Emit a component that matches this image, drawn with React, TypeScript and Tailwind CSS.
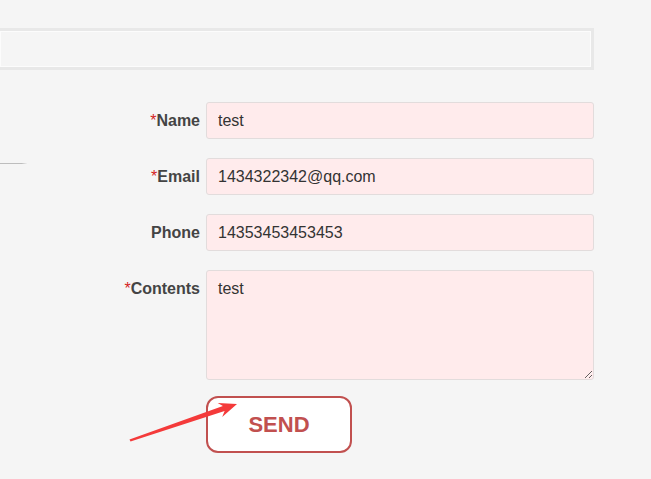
import React from "react";

const font = { fontFamily: '"Liberation Sans", Arial, sans-serif' };

function Label({ text, required }: { text: string; required?: boolean }) {
  return (
    <div className="w-[179px] shrink-0 pr-[6px] text-right text-[16px] font-bold text-[#444] leading-[18px]">
      {required && <span className="font-normal text-[#d41f1f]">*</span>}
      {text}
    </div>
  );
}

function Field({ label, value, required }: { label: string; value: string; required?: boolean }) {
  return (
    <div className="flex items-center mb-[19px]">
      <Label text={label} required={required} />
      <input
        readOnly
        value={value}
        className="w-[388px] h-[37px] rounded-[3px] border border-[#e2dcdc] bg-[#ffebec] px-[11px] text-[16px] text-[#333] outline-none"
        style={font}
      />
    </div>
  );
}

export default function App() {
  return (
    <div className="relative min-h-[479px] w-[651px] overflow-hidden bg-[#f5f5f5]" style={font}>
      <div className="mt-[28px] h-[42px] w-[594px] border-[3px] border-l-0 border-[#e8e8e8] shadow-[inset_0_0_0_1px_#fcfcfc]" />

      <div className="mt-[32px] flex">
        <div className="w-[27px] shrink-0 pt-[61px]">
          <div className="h-px w-[27px] bg-gradient-to-r from-[#bdbdbd] from-80% to-[#f0f0f0]" />
        </div>
        <div>
          <Field label="Name" value="test" required />
          <Field label="Email" value="1434322342@qq.com" required />
          <Field label="Phone" value="14353453453453" />
          <div className="flex items-start">
            <div className="pt-[10px]">
              <Label text="Contents" required />
            </div>
            <textarea
              readOnly
              value="test"
              className="w-[388px] h-[110px] rounded-[3px] border border-[#e2dcdc] bg-[#ffebec] px-[11px] pt-[9px] text-[16px] leading-[18px] text-[#333] outline-none"
              style={font}
            />
          </div>
          <div className="mt-[16px] flex">
            <div className="w-[179px] shrink-0" />
            <button
              className="flex h-[57px] w-[146px] items-center justify-center rounded-[12px] border-2 border-[#c1504f] bg-white text-[22px] font-bold text-[#c1504f]"
              style={font}
            >
              SEND
            </button>
          </div>
        </div>
      </div>

      <svg className="absolute left-0 top-0" width="651" height="479" viewBox="0 0 651 479">
        <polygon
          points="129.5,439.5 130.5,441.5 224.6,411 222.2,417 237,404 217.7,403 222.9,406"
          fill="#f43a3a"
        />
      </svg>
    </div>
  );
}
